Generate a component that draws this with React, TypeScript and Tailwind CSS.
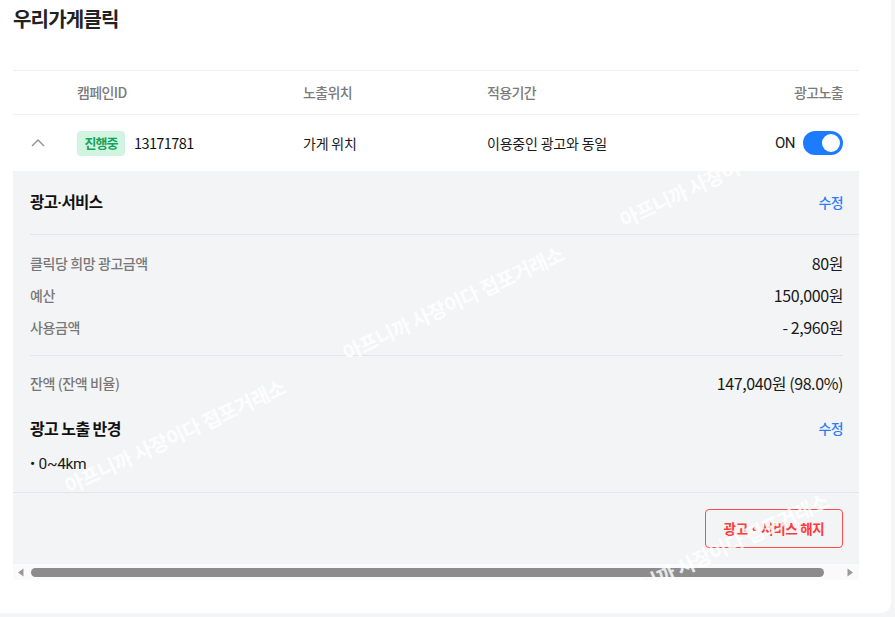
import React from "react";

const Watermark = ({ className }: { className: string }) => (
  <div
    className={
      "pointer-events-none absolute -translate-x-1/2 -translate-y-1/2 -rotate-[25deg] whitespace-nowrap text-[20px] font-bold tracking-[-0.5px] text-white/80 " +
      className
    }
  >
    아프니까 사장이다 접포거래소
  </div>
);

export default function App() {
  return (
    <div className="h-[617px] w-full bg-[#f4f5f7] font-['Noto_Sans_CJK_KR','Noto_Sans',sans-serif] text-[#222]">
      <div className="relative h-[613px] w-[891px] overflow-hidden rounded-br-[10px] bg-white">
        <h1 className="pl-[13px] pt-[5px] text-[20px] font-semibold leading-[28px] tracking-[-0.8px] text-[#222]">
          우리가게클릭
        </h1>

        <div className="mx-[13px] mt-[37px] w-[846px]">
          {/* header row */}
          <div className="grid h-[45px] grid-cols-[64px_226px_184px_1fr_auto] items-center border-y border-[#efefef] pr-[16px] text-[14px] font-medium tracking-[-0.6px] text-[#7b7b7b]">
            <div />
            <div>캠페인ID</div>
            <div>노출위치</div>
            <div>적용기간</div>
            <div className="text-right">광고노출</div>
          </div>

          {/* data row */}
          <div className="grid h-[56px] grid-cols-[64px_226px_184px_1fr_auto] items-center pr-[16px] text-[14px] tracking-[-0.2px] text-[#1a1a1a]">
            <div className="flex justify-start pl-[18px]">
              <svg width="14" height="8" viewBox="0 0 14 8" fill="none">
                <path d="M1 7L7 1L13 7" stroke="#8f8f8f" strokeWidth="1.4" />
              </svg>
            </div>
            <div className="flex items-center gap-[9px]">
              <span className="flex h-[25px] w-[48px] items-center justify-center rounded-[4px] bg-[#d2f5e2] text-[13px] font-bold tracking-[-1px] text-[#17a35d]">
                진행중
              </span>
              <span className="text-[14.5px] tracking-[-0.6px] text-[#111]">13171781</span>
            </div>
            <div>가게 위치</div>
            <div>이용중인 광고와 동일</div>
            <div className="flex items-center gap-[8px]">
              <span className="font-['Roboto',sans-serif] text-[15px] tracking-[-0.5px] text-[#222]">ON</span>
              <span className="flex h-[24px] w-[40px] items-center justify-end rounded-full bg-[#1d7bff] pr-[3px]">
                <span className="h-[18px] w-[18px] rounded-full bg-white" />
              </span>
            </div>
          </div>

          {/* expanded panel + scrollbar with watermark layer */}
          <div className="relative overflow-hidden">
            <div className="bg-[#f3f4f6]">
              <div className="ml-[17px] flex h-[64px] items-center justify-between border-b border-[#e3e5e8] pr-[16px]">
                <span className="text-[15.5px] font-bold tracking-[-0.6px] text-[#111]">
                  광고<span className="font-['Roboto',sans-serif]">·</span>서비스
                </span>
                <span className="text-[14px] font-medium tracking-[-0.6px] text-[#2f7df6]">수정</span>
              </div>

              <div className="mx-[16px] ml-[17px] border-b border-[#e3e5e8] py-[12px]">
                {[
                  ["클릭당 희망 광고금액", "80원"],
                  ["예산", "150,000원"],
                  ["사용금액", "- 2,960원"],
                ].map(([k, v]) => (
                  <div key={k} className="flex h-[32px] items-center justify-between">
                    <span className="text-[14px] font-medium tracking-[-0.4px] text-[#787878]">{k}</span>
                    <span className="text-[16px] tracking-[-0.4px] text-[#1a1a1a]">{v}</span>
                  </div>
                ))}
              </div>

              <div className="border-b border-[#e3e5e8] pb-[15px] pl-[17px] pr-[16px] pt-[11px]">
                <div className="flex h-[32px] items-center justify-between">
                  <span className="text-[14px] font-medium tracking-[-0.4px] text-[#787878]">잔액 (잔액 비율)</span>
                  <span className="text-[16px] tracking-[-0.4px] text-[#1a1a1a]">147,040원 (98.0%)</span>
                </div>
                <div className="mt-[13px] flex h-[32px] items-center justify-between">
                  <span className="text-[16px] font-bold tracking-[-0.6px] text-[#111]">광고 노출 반경</span>
                  <span className="text-[14px] font-medium tracking-[-0.6px] text-[#2f7df6]">수정</span>
                </div>
                <div className="mt-[9px] flex h-[24px] items-center font-['Roboto',sans-serif] text-[15.5px] tracking-[-0.3px] text-[#1a1a1a]">
                  • 0~4km
                </div>
              </div>

              <div className="flex justify-end px-[16px] py-[16px]">
                <button className="h-[39px] w-[138px] rounded-[4px] border border-[#ff4d4d] text-[13.5px] font-semibold tracking-[-0.3px] text-[#ff3b3b]">
                  광고・서비스 해지
                </button>
              </div>
            </div>

            {/* scrollbar */}
            <div className="flex h-[16px] items-center bg-[#fafafa] pl-[4px] pr-[5px]">
              <svg width="8" height="9" viewBox="0 0 8 9" className="mr-[6px]">
                <path d="M6.5 0.5V8.5L1 4.5Z" fill="#999999" />
              </svg>
              <div className="h-[9px] flex-1 rounded-full bg-[#8c8c8c]" />
              <div className="w-[22px]" />
              <svg width="8" height="9" viewBox="0 0 8 9">
                <path d="M1.5 0.5V8.5L7 4.5Z" fill="#999999" />
              </svg>
            </div>

            {/* watermarks (positioned relative to the panel: panel top = 171, left = 13) */}
            <Watermark className="left-[440px] top-[132px]" />
            <Watermark className="left-[717px] top-[-1px]" />
            <Watermark className="left-[162px] top-[265px]" />
            <Watermark className="left-[705px] top-[379px]" />
          </div>
        </div>
      </div>
    </div>
  );
}
